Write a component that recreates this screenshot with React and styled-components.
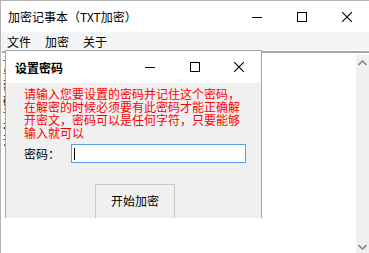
import React from "react";
import styled, { createGlobalStyle } from "styled-components";

const GlobalStyle = createGlobalStyle`
  html, body {
    margin: 0;
    padding: 0;
    background: #fff;
  }
  body {
    font-family: "Noto Sans CJK SC", "Noto Sans", sans-serif;
    font-size: 12px;
  }
`;

const Window = styled.div`
  position: relative;
  width: 369px;
  height: 253px;
  display: flex;
  flex-direction: column;
  background: #fff;
  border-top: 1px solid #b4b4b4;
  border-left: 1px solid #b4b4b4;
  box-sizing: border-box;
  overflow: hidden;
`;

const TitleBar = styled.div`
  height: ${(p) => p.h}px;
  flex: none;
  display: flex;
  align-items: center;
  background: #fff;
  padding-left: ${(p) => p.pad}px;
  box-sizing: border-box;
`;

const Title = styled.div`
  flex: 1;
  color: #000;
  font-size: 12px;
  font-weight: ${(p) => (p.bold ? 700 : 400)};
  white-space: nowrap;
`;

const Controls = styled.div`
  display: flex;
  align-items: center;
  height: 100%;
`;

const CtrlButton = styled.div`
  width: ${(p) => p.w}px;
  height: 100%;
  display: flex;
  align-items: center;
  justify-content: center;
`;

const MenuBar = styled.div`
  height: 18px;
  flex: none;
  display: flex;
  align-items: center;
  background: #f4f5f7;
  padding-left: 6px;
  gap: 14px;
  font-size: 12px;
`;

const MenuItem = styled.span`
  color: #000;
`;

const EditArea = styled.div`
  flex: 1;
  display: flex;
  border-top: 2px solid #a8a8a8;
  margin-top: 1px;
  margin-left: 1px;
`;

const TextBody = styled.div`
  flex: 1;
  padding: 2px 0 0 1px;
  font-size: 12px;
  line-height: 13px;
  color: #000;
  white-space: pre;
  overflow: hidden;
`;

const ScrollBar = styled.div`
  width: 13px;
  margin-top: 2px;
  background: #f0f0f0;
  display: flex;
  flex-direction: column;
  justify-content: space-between;
  align-items: center;
  padding: 5px 0 3px;
`;

const Dialog = styled.div`
  position: absolute;
  left: 4px;
  top: 49px;
  width: 257px;
  height: 168px;
  display: flex;
  flex-direction: column;
  border: 1px solid #a6a6a6;
  box-sizing: border-box;
  background: #f0f0f0;
`;

const DialogBody = styled.div`
  flex: 1;
  background: #f0f0f0;
  padding: 4px 0 0 18px;
  display: flex;
  flex-direction: column;
`;

const Notice = styled.div`
  width: 220px;
  color: #ff0000;
  font-size: 12px;
  line-height: 13px;
`;

const FieldRow = styled.div`
  display: flex;
  align-items: center;
  margin-top: 5px;
`;

const Label = styled.span`
  width: 47px;
  font-size: 12px;
  color: #000;
`;

const Input = styled.div`
  width: 175px;
  height: 19px;
  box-sizing: border-box;
  border: 1px solid #5b9de3;
  background: #fff;
  display: flex;
  align-items: center;
  padding-left: 2px;
`;

const Caret = styled.div`
  width: 1px;
  height: 12px;
  background: #000;
`;

const ActionButton = styled.div`
  align-self: flex-start;
  margin: 21px 0 0 71px;
  width: 80px;
  height: 34px;
  box-sizing: border-box;
  border: 1px solid #c8c8c8;
  border-bottom: none;
  background: #f0f0f0;
  display: flex;
  align-items: center;
  justify-content: center;
  padding-bottom: 2px;
  font-size: 12px;
  color: #000;
`;

const MinIcon = () => (
  <svg width="10" height="10" viewBox="0 0 10 10">
    <path d="M0 5.5h10" stroke="#000" strokeWidth="1" />
  </svg>
);

const MaxIcon = () => (
  <svg width="10" height="10" viewBox="0 0 10 10">
    <rect x="0.5" y="0.5" width="9" height="9" fill="none" stroke="#000" strokeWidth="1" />
  </svg>
);

const CloseIcon = () => (
  <svg width="10" height="10" viewBox="0 0 10 10">
    <path d="M0 0L10 10M10 0L0 10" stroke="#000" strokeWidth="1.1" />
  </svg>
);

const Chevron = ({ up }) => (
  <svg width="9" height="6" viewBox="0 0 9 6">
    <path
      d={up ? "M0.5 5L4.5 1L8.5 5" : "M0.5 1L4.5 5L8.5 1"}
      fill="none"
      stroke="#888"
      strokeWidth="1.6"
    />
  </svg>
);

const editorText = "设\n置\n密\n码\n请\n在\n开";

export default function App() {
  return (
    <>
      <GlobalStyle />
      <Window>
        <TitleBar h={31} pad={7}>
          <Title>加密记事本（TXT加密）</Title>
          <Controls>
            <CtrlButton w={45}>
              <MinIcon />
            </CtrlButton>
            <CtrlButton w={45}>
              <MaxIcon />
            </CtrlButton>
            <CtrlButton w={45}>
              <CloseIcon />
            </CtrlButton>
          </Controls>
        </TitleBar>
        <MenuBar>
          <MenuItem>文件</MenuItem>
          <MenuItem>加密</MenuItem>
          <MenuItem>关于</MenuItem>
        </MenuBar>
        <EditArea>
          <TextBody>{editorText}</TextBody>
          <ScrollBar>
            <Chevron up />
            <Chevron />
          </ScrollBar>
        </EditArea>

        <Dialog>
          <TitleBar h={32} pad={9}>
            <Title bold>设置密码</Title>
            <Controls>
              <CtrlButton w={45}>
                <MinIcon />
              </CtrlButton>
              <CtrlButton w={45}>
                <MaxIcon />
              </CtrlButton>
              <CtrlButton w={44}>
                <CloseIcon />
              </CtrlButton>
            </Controls>
          </TitleBar>
          <DialogBody>
            <Notice>
              请输入您要设置的密码并记住这个密码，在解密的时候必须要有此密码才能正确解开密文，密码可以是任何字符，只要能够输入就可以
            </Notice>
            <FieldRow>
              <Label>密码：</Label>
              <Input>
                <Caret />
              </Input>
            </FieldRow>
            <ActionButton>开始加密</ActionButton>
          </DialogBody>
        </Dialog>
      </Window>
    </>
  );
}
